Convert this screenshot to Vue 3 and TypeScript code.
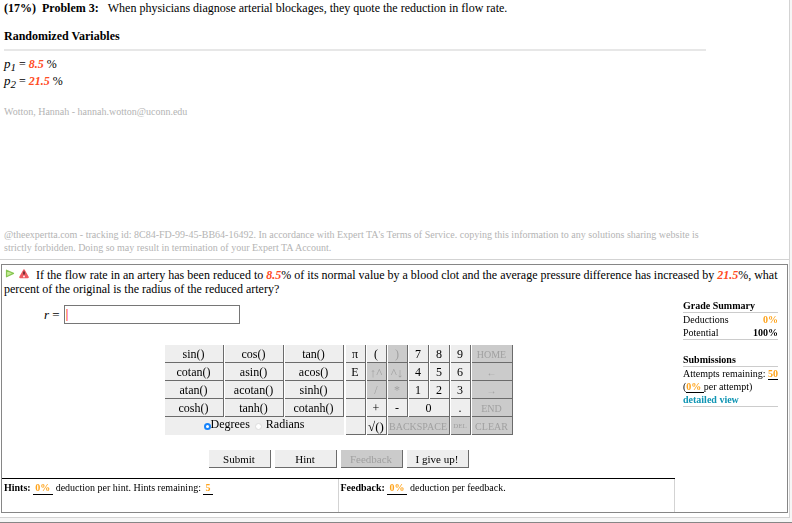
<script setup lang="ts">
import { onMounted, ref } from 'vue'

interface Key {
  label: string
  span?: number
  off?: boolean
  small?: boolean
  tiny?: boolean
  large?: boolean
}

const functions: string[] = [
  'sin()', 'cos()', 'tan()',
  'cotan()', 'asin()', 'acos()',
  'atan()', 'acotan()', 'sinh()',
  'cosh()', 'tanh()', 'cotanh()',
]

const keys: Key[] = [
  { label: 'π' }, { label: '(' }, { label: ')', off: true }, { label: '7' }, { label: '8' }, { label: '9' }, { label: 'HOME', off: true, small: true },
  { label: 'E' }, { label: '↑^', off: true, large: true }, { label: '^↓', off: true, large: true }, { label: '4' }, { label: '5' }, { label: '6' }, { label: '←', off: true, small: true },
  { label: '' }, { label: '/', off: true }, { label: '*', off: true }, { label: '1' }, { label: '2' }, { label: '3' }, { label: '→', off: true, small: true },
  { label: '' }, { label: '+' }, { label: '-' }, { label: '0', span: 2 }, { label: '.' }, { label: 'END', off: true, small: true },
  { label: '' }, { label: '√()', large: true }, { label: 'BACKSPACE', span: 3, off: true, small: true }, { label: 'DEL', off: true, tiny: true }, { label: 'CLEAR', off: true, small: true },
]

const answer = ref('')
const unit = ref('deg')
const answerBox = ref<HTMLInputElement | null>(null)

onMounted(() => answerBox.value?.focus())

function press(label: string) {
  answer.value += label
}
</script>

<template>
  <div class="page">
    <main class="sheet">
      <section class="problem">
        <p class="statement"><b class="number">(17%) &nbsp;Problem 3:</b>When physicians diagnose arterial blockages, they quote the reduction in flow rate.</p>
        <h2 class="heading">Randomized Variables</h2>
        <hr class="rule">
        <p class="variable"><i>p<span class="sub">1</span></i> = <em class="value">8.5</em> %</p>
        <p class="variable"><i>p<span class="sub">2</span></i> = <em class="value">21.5</em> %</p>
        <p class="owner">Wotton, Hannah - hannah.wotton@uconn.edu</p>
        <p class="notice">@theexpertta.com - tracking id: 8C84-FD-99-45-BB64-16492. In accordance with Expert TA's Terms of Service. copying this information to any solutions sharing website is strictly forbidden. Doing so may result in termination of your Expert TA Account.</p>
      </section>

      <section class="part">
        <p class="question">
          <svg class="icon play" viewBox="0 0 10 10" aria-hidden="true">
            <path d="M1.5 1.2 L8.5 4.4 L1.5 7.8 Z" fill="#c5eb96" stroke="#86c552" stroke-width="1.2" stroke-linejoin="round" />
          </svg>
          <svg class="icon alert" viewBox="0 0 10 10" aria-hidden="true">
            <path d="M5 1.4 L8.8 8.2 H1.2 Z" fill="#ee5a60" stroke="#ee5a60" stroke-width="2" stroke-linejoin="round" />
            <path d="M5 2.4 V5.6" stroke="#53262a" stroke-width="1.5" />
            <circle cx="5" cy="7.5" r="0.9" fill="#fff" />
          </svg>
          If the flow rate in an artery has been reduced to <em class="value">8.5</em>% of its normal value by a blood clot and the average pressure difference has increased by <em class="value">21.5</em>%, what percent of the original is the radius of the reduced artery?
        </p>

        <div class="work">
          <div class="entry">
            <div class="answer">
              <label for="answer"><i>r</i> =</label>
              <input id="answer" ref="answerBox" v-model="answer" type="text" placeholder="|" autocomplete="off">
            </div>

            <div class="pad">
              <div class="functions">
                <button v-for="name in functions" :key="name" type="button" class="key" @click="press(name)">{{ name }}</button>
                <div class="units">
                  <label><input v-model="unit" type="radio" name="unit" value="deg">Degrees</label>
                  <label class="radians"><input v-model="unit" type="radio" name="unit" value="rad">Radians</label>
                </div>
              </div>
              <div class="keys">
                <button
                  v-for="(key, i) in keys"
                  :key="i"
                  type="button"
                  class="key"
                  :class="{ small: key.small, tiny: key.tiny, large: key.large, two: key.span === 2, three: key.span === 3 }"
                  :disabled="key.off"
                  @click="press(key.label)"
                >{{ key.label }}</button>
              </div>
            </div>

            <div class="actions">
              <button type="button" class="key">Submit</button>
              <button type="button" class="key">Hint</button>
              <button type="button" class="key" disabled>Feedback</button>
              <button type="button" class="key">I give up!</button>
            </div>
          </div>

          <aside class="summary">
            <h3>Grade Summary</h3>
            <table class="grades">
              <tbody>
                <tr><th scope="row">Deductions</th><td class="amount">0%</td></tr>
                <tr><th scope="row">Potential</th><td>100%</td></tr>
              </tbody>
            </table>
            <h3 class="submissions">Submissions</h3>
            <div class="attempts">
              <p>Attempts remaining: <b class="amount lined">50</b></p>
              <p>(<b class="amount lined">0% </b> per attempt)</p>
              <p><a href="#">detailed view</a></p>
            </div>
          </aside>
        </div>

        <div class="help">
          <p class="cell"><b>Hints:</b> <b class="amount lined wide">0%</b> deduction per hint. Hints remaining: <b class="amount lined wide">5</b></p>
          <p class="cell"><b>Feedback:</b> <b class="amount lined wide">0%</b> deduction per feedback.</p>
        </div>
      </section>
    </main>
  </div>
</template>

<style>
body {
  margin: 0;
  background: #fff;
}
</style>

<style scoped>
.page {
  padding: 0 2px 4px 0;
  background: #f6f6f6;
  border-bottom: 1px solid #868686;
  color: #000;
  font: 12px/14px "Liberation Serif", "Times New Roman", serif;
}

p, h2, h3 {
  margin: 0;
}

.sheet {
  padding-bottom: 4px;
  background: #fff;
  border-right: 1px solid #d3d3d3;
  border-bottom: 1px solid #d3d3d3;
}

.problem {
  padding: 1px 4px 5px;
  border-bottom: 1px solid #d3d3d3;
}

.number {
  margin-right: 9px;
}

.heading {
  margin-top: 14px;
  font-size: 12px;
  line-height: 14px;
}

.rule {
  max-width: 702px;
  height: 2px;
  margin: 6px 0 5px;
  border: 0;
  background: #e7e7e7;
}

.variable {
  height: 17px;
  line-height: 17px;
}

.variable i {
  font-size: 13px;
  line-height: 14px;
}

.sub {
  position: relative;
  top: 3px;
  font-size: 11px;
}

.value {
  color: #ff4b24;
  font-weight: bold;
}

.owner, .notice {
  max-width: 700px;
  color: #b4b4b4;
  font-size: 10px;
  line-height: 13px;
}

.owner {
  margin-top: 15px;
}

.notice {
  margin-top: 110px;
}

.part {
  margin: 4px 1px 0;
  border: 1px solid #868686;
}

.question {
  padding: 3px 2px 0;
}

.icon {
  width: 10px;
  height: 10px;
}

.play {
  margin: 0 4px 0 1px;
}

.alert {
  margin-right: 4px;
}

.work {
  display: flex;
  gap: 8px;
  padding-right: 9px;
}

.entry {
  flex: 1;
  min-width: 0;
}

.answer {
  display: flex;
  align-items: center;
  gap: 4px;
  padding: 9px 0 0 42px;
  font-size: 13px;
}

.answer input {
  box-sizing: border-box;
  width: 176px;
  height: 19px;
  padding: 0 1px;
  border: 1px solid #767676;
  border-radius: 0;
  outline: none;
  background: #fff;
  color: #f22;
  caret-color: #f22;
  font: inherit;
  font-size: 12px;
}

.answer input::placeholder {
  color: #f22;
  font-weight: bold;
  opacity: 1;
}

.pad {
  display: flex;
  justify-content: center;
  gap: 2px;
  padding-top: 21px;
}

.functions, .keys {
  display: grid;
  grid-auto-rows: 18px;
  column-gap: 1px;
}

.functions {
  grid-template-columns: repeat(3, 59px);
}

.keys {
  grid-template-columns: repeat(6, 20px) 41px;
}

.key {
  min-width: 0;
  margin: 0;
  padding: 0;
  border: 0 solid #6b6b6b;
  border-width: 0 1px 1px 0;
  border-radius: 0;
  background: #eee;
  color: #000;
  font: 12px/16px "Liberation Serif", "Times New Roman", serif;
  white-space: nowrap;
}

.pad .key {
  padding-top: 2px;
  line-height: 15px;
}

.key:disabled {
  background: #cbcbcb;
  color: #a0a0a0;
}

.small {
  font-size: 10px;
}

.tiny {
  font-size: 7px;
}

.large {
  font-size: 13px;
}

.two {
  grid-column: span 2;
}

.three {
  grid-column: span 3;
}

.units {
  display: flex;
  grid-column: 1 / -1;
  justify-content: center;
  gap: 5px;
  background: #eee;
  line-height: 14px;
}

.units label {
  display: flex;
}

.units input {
  box-sizing: border-box;
  width: 7px;
  height: 7px;
  margin: 6px 0 0;
  appearance: none;
  border: 1px solid #ddd;
  border-radius: 50%;
  background: #fff;
}

.units input:checked {
  border: 2px solid #1683fb;
}

.units .radians input {
  margin-right: 4px;
}

.actions {
  display: flex;
  justify-content: center;
  gap: 4px;
  padding: 15px 0 10px;
}

.actions .key {
  width: 62px;
  height: 18px;
  font-size: 11px;
}

.summary {
  width: 95px;
  padding-top: 4px;
  font-size: 10px;
  line-height: 13px;
  white-space: nowrap;
}

.summary h3 {
  border-bottom: 1px solid #ccc;
  font-size: 10px;
  line-height: 12px;
}

.summary .submissions {
  margin-top: 14px;
}

.grades {
  width: 100%;
  border-bottom: 1px solid #ccc;
  border-spacing: 0;
}

.grades th, .grades td {
  padding: 0;
}

.grades th {
  font-weight: normal;
  text-align: left;
}

.grades td {
  font-weight: bold;
  text-align: right;
}

.attempts {
  border-bottom: 1px solid #ccc;
}

.amount {
  color: #ffa31a;
}

.lined {
  border-bottom: 1px solid #000;
}

.wide {
  padding: 0 3px 1px 2px;
}

.summary a {
  color: #0f95b4;
  font-weight: bold;
  text-decoration: none;
}

.help {
  display: grid;
  grid-template-columns: 1fr 1fr;
  margin-right: 112px;
  border-top: 1px solid #000;
  font-size: 10px;
  line-height: 14px;
}

.cell {
  min-height: 30px;
  padding: 2px 1px 1px 2px;
  border-right: 1px solid #d3d3d3;
}
</style>
